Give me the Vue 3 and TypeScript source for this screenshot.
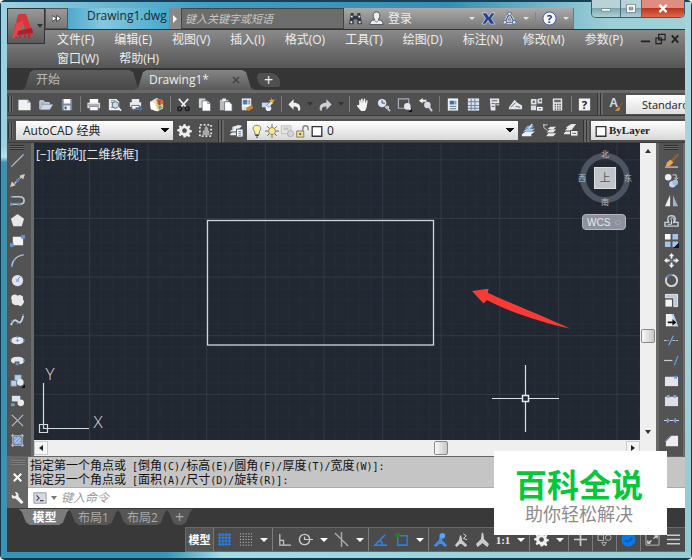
<script setup lang="ts">
import { ref } from 'vue'

interface Tool {
  kind: 'icon' | 'sep' | 'caret' | 'text'
  name?: string
  label?: string
}

const icon = (name: string, label: string): Tool => ({ kind: 'icon', name, label })
const sep: Tool = { kind: 'sep' }
const caret = (label: string): Tool => ({ kind: 'caret', label })

const gearPath =
  'M7 1h2l.4 2 1.6.7 1.8-1.2 1.5 1.5-1.2 1.8.7 1.6 2 .4v2l-2 .4-.7 1.6 1.2 1.8-1.5 1.5-1.8-1.2-1.6.7L9 15.500H7l-.4-2-1.600-.7-1.800 1.200-1.500-1.500 1.200-1.800-.7-1.600-2-.4v-2l2-.4.7-1.600L1.700 4l1.500-1.500L5 3.700 6.600 3zM8 5.500a2.500 2.500 0 1 0 .01 0z'

const icons: Record<string, string> = {
  logo: '<path d="M1 25 7 2h5v8L6 22z" fill="#c8343b"/><path d="M8 1h7l7 20-5 3-1-5-8 1 1-3 5-1-3-9-6 15-4 3z" fill="#d6353c"/><path d="M1 25 6 9l1 1 6-3-6 15-2 3z" fill="#e2474b"/><path d="m7 18 9-2 5-1 1 5-7 1-9 1z" fill="#b01f2a"/><path d="M5 23v3M9 21v4M14 20v5M18 20v6" stroke="#b92a33" stroke-width="1.500"/>',
  new: '<path d="M1.500 3h10l3 3v8h-13z" fill="#eef0f4"/><path d="M11 3v3.500h3.500z" fill="#aab"/>',
  open: '<path d="M2 13V4h4l1 2h5v2" fill="#aab6c6" stroke="#dde3ec"/><path d="M2 13.500 5 8h11l-3.500 5.500z" fill="#cdd8e8" stroke="#8793a8" stroke-width=".6"/>',
  save: '<path d="M3 2h11v12H3z" fill="#7888a4"/><path d="M5 2h7v5H5z" fill="#fff"/><path d="M5 9h7v5H5z" fill="#e7eaf0"/><path d="M6 10h2v3H6z" fill="#456"/>',
  print: '<path d="M4 2h9v5H4z" fill="#fff"/><path d="M1.500 6h13.500v6H1.500z" fill="#dfe2e7"/><path d="M4 10h9v4.500H4z" fill="#fafafa" stroke="#667" stroke-width=".8"/><path d="M2 8.500h12" stroke="#778"/>',
  preview: '<path d="M2 2h8l3 3v9H2z" fill="#eceff3"/><path d="M4 4h5M4 6h3M4 11h3" stroke="#788"/><circle cx="9" cy="8.500" r="3.500" fill="#cfdae8" stroke="#567"/><path d="m11.500 11 3.500 3.500" stroke="#eee" stroke-width="2"/>',
  publish: '<path d="M4 2h8v4H4zM2 5.500h12v5H2z" fill="#e8eaee"/><path d="M4 9h8v4H4z" fill="#fff" stroke="#667"/><path d="M8 11h4V8.500l4 4-4 3.500v-3H8z" fill="#4a6da6"/>',
  web: '<path d="M1 5 8 1l7 3v8l-6 3.500L2 13z" fill="#dfe8d8"/><path d="M7 3q5-2 8 1v4h-4z" fill="#dd6b3b"/><path d="M8 4c-1 4 0 7 3 10l4-2V8l-4-1z" fill="#eac656"/><path d="M1 5c4 0 7 3 7 10l-6-2z" fill="#fff"/><path d="M11 3q-4 3 0 6l2-1q-2-2 0-4z" fill="#b34a35"/><path d="M10 10q3-2 4 1l-3 3z" fill="#5f9cca"/>',
  cut: '<path d="m3 2 8 9M13 2 5 11" stroke="#eef0f4" stroke-width="1.800"/><circle cx="4" cy="12.500" r="2" fill="none" stroke="#1c1e22" stroke-width="1.600"/><circle cx="12" cy="12.500" r="2" fill="none" stroke="#1c1e22" stroke-width="1.600"/>',
  copy: '<path d="M2 1.500h7v10H2z" fill="#d5d8de"/><path d="M5.500 4h6l3 3v8h-9z" fill="#fff" stroke="#5d6470" stroke-width=".8"/><path d="M11.500 4v3h3" fill="none" stroke="#788"/>',
  paste: '<path d="M2 3h9v11H2z" fill="#b7b9bd"/><path d="M4.500 1.500h4v3h-4z" fill="#eee"/><path d="M7 5h5l3 3v7H7z" fill="#fff" stroke="#5d6470" stroke-width=".8"/>',
  block: '<path d="M3 1.500h10v10H3z" fill="#fff"/><path d="M4 3h5v5H4z" fill="#4d7fb5"/><path d="M10 3h2v5h-2z" fill="#89a"/><path d="M3 10h6v4H3z" fill="#dce3ee"/><path d="m14 8-7 4 3 3 5-3z" fill="#c98331"/>',
  match: '<path d="M2 6h8v5H2z" fill="#cad8ec"/><circle cx="9" cy="12" r="3" fill="#eef"/><path d="m7 9 5-5 2 2-4 5z" fill="#dfe3ea" stroke="#667" stroke-width=".6"/><path d="m12 0 1 3 3 0-2 2 0 3-2-3-3-1 3-1z" fill="#e5a93c"/>',
  undo: '<path d="M7 2.500v3.500c5 0 8 2 7 8l-2 1c0-4-1-5-5-5v3.500L1.500 8z" fill="#eef0f3"/>',
  redo: '<path d="M9 2.500V6C4 6 1 8 2 14l2 1c0-4 1-5 5-5v3.500L14.500 8z" fill="#cdd0d5"/>',
  pan: '<path d="M4.500 8V3.500q1-1 1.500.2l.5 3V2q1-1 1.700 0v4.500L9.500 2q1-.8 1.500.3L10.700 7l1.500-3.500q1.200-.4 1.300.6L12.500 10q-.5 3-2 5H6.500L2 9.500q.2-1.400 1.500-.8z" fill="#f2f2f4"/>',
  zoomrt: '<circle cx="6.500" cy="6.500" r="4.500" fill="#dce4ee"/><path d="M6.500 3.500v3h3" stroke="#345" fill="none"/><circle cx="12" cy="11" r="2" fill="#ccd2da"/><path d="m10 10 5 5" stroke="#bbc" stroke-width="2"/>',
  zoomwin: '<path d="M1.500 2h11v10h-11z" fill="none" stroke="#aab" stroke-width="1.300"/><circle cx="11" cy="10" r="3.500" fill="#e4e8ee"/><path d="m13 12 2 2" stroke="#eee" stroke-width="2"/><path d="M16 12v4h-4z" fill="#111"/>',
  zoomprev: '<path d="m1 4 4-3v2h4v2H5v2z" fill="#eee"/><circle cx="10" cy="8.500" r="3.500" fill="#d8dde5"/><path d="m12 11 3 4" stroke="#ccd" stroke-width="2"/>',
  props: '<path d="M3 1.500h11v13H3z" fill="#eef1f6"/><path d="M5 4h5v4H5z" fill="#3d6fb0"/><path d="M5 10h7M5 12.500h7M11.500 4v4" stroke="#567"/>',
  design: '<path d="M2 1.500h12v13H2z" fill="#dfe5ee"/><path d="M5.500 2v12M9.500 2v12M2 5h12M2 9h12M2 12h12" stroke="#617ca0" stroke-width="1"/>',
  palette: '<path d="M3 1.500h10v5H9v8H4z" fill="#e5e7eb"/><path d="M5 4h6M5 7h3M5 10h3" stroke="#556"/><path d="M10 7h3v2h-3z" fill="#bbb"/>',
  sheet: '<path d="m1 11 6-8 3 3 5 3v4H1z" fill="#e2e5ea"/><path d="m3 11 5-5M8 10l5 1" stroke="#667"/>',
  markup: '<path d="M2 2h6v6H2zM9 2l5-1v6H9zM2 9h6v5H2z" fill="#dadde3"/><path d="M4 4h2v2H4zM11 3h2v2h-2z" fill="#556"/><path d="M8 10h7v5H8z" fill="#fff" stroke="#556"/><path d="M10 12.500h3" stroke="#556"/>',
  calc: '<path d="M3 1.500h10v13H3z" fill="#e6e8ec"/><path d="M4.500 3h7v2.500h-7z" fill="#667"/><path d="M5 8h7M5 10.500h7M5 13h7" stroke="#555" stroke-width="1.400" stroke-dasharray="1.500 1"/>',
  help: '<path d="M2 1.500h12v13H2z" fill="#f2f2f4"/><text x="8" y="13" text-anchor="middle" font-family="Open Sans" font-weight="700" font-size="12" fill="#222">?</text>',
  style: '<text x="6" y="11" text-anchor="middle" font-family="Liberation Sans" font-weight="700" font-size="13" fill="#d8dade">A</text><path d="m16 5-5 6 1 1 4-5z" fill="#8d5a30"/><path d="M12 11c-3 0-2 3-5 3 3 2 6 1 6-2z" fill="#c98d38"/>',
  gear: `<path fill-rule="evenodd" d="${gearPath}" fill="#eee"/>`,
  space: '<path d="M2 2h12v12H2z" fill="none" stroke="#ddd" stroke-width="2" stroke-dasharray="2 2"/><path d="M5 13V8h2V5l2-2 2 3v2l1 1v4z" fill="#aaa"/>',
  layers: '<path d="m4 4 6-2 4 1-3 3H3zM2 8l3-2h5l-1 3H1zM2 11l2-1h4v3H1z" fill="#e8eaed"/><path d="M8 6.500h7V15H8z" fill="#fff" stroke="#456"/><path d="M10 9h3M10 11h3M10 13h3" stroke="#47a"/>',
  bulb: '<path d="M8 1.500c5.500 0 5 5 2.500 7.500V12h-5V9C2.500 6 3 1.500 8 1.500z" fill="#fff2a8" stroke="#777"/><path d="M6 13h4M7 15h2" stroke="#444" stroke-width="1.500"/>',
  sun: '<path d="M8 0v16M0 8h16M2.500 2.500l11 11M13.500 2.500l-11 11" stroke="#5b5b50"/><circle cx="8" cy="8" r="4" fill="#fbe78c" stroke="#8f8348"/>',
  vpfreeze: '<path d="M1.500 2h11v9h-11z" fill="#e5e5e5" stroke="#bbb"/><path d="M4 4h6v3H4z" fill="#c4c4c4"/><circle cx="12" cy="11" r="3.500" fill="#d5d5d5" stroke="#aaa"/>',
  lock: '<path d="M2 8h8v7H2z" fill="#f2df8f" stroke="#7e744a"/><path d="M9 8V5q0-3 3-3t3 3v2" fill="none" stroke="#888" stroke-width="1.600"/><path d="M5 11.500h2" stroke="#444" stroke-width="2"/>',
  swatch: '<path d="M2.500 3h11v11h-11z" fill="#fff" stroke="#333" stroke-width="1.500"/>',
  lay1: '<path d="m1 12 4-3h10l-4 3v2H1z" fill="#eef"/><path d="m2 9 4-3h9l-4 3z" fill="#a6c4ea"/><path d="m4 6 3-3h7l-3 3z" fill="#7ea8de"/><path d="m8 6 4-5" stroke="#dde" stroke-width="1.500"/>',
  lay2: '<path d="m5 13 2-2h8l-3 3H5zM5 10l3-3h7l-3 3zM6 6l3-2h6l-3 3z" fill="#e5e7ea"/><path d="M1 2h5M2 1v4l4 3" fill="none" stroke="#ccc"/>',
  lay3: '<path d="m4 4 5-3h5l-3 4H3zM2 8l3-3h6l-2 3zM1 11l2-2h5v3H1z" fill="#e8e9eb"/><path d="M8 8h8v6H8z" fill="#eee" stroke="#444"/><path d="M10 11h4" stroke="#555"/>',
  line: '<path d="M2 14 14 2" stroke="#b4bfd2" stroke-width="1.500"/><path d="M1 13h2v2H1zM13 1h2v2h-2z" fill="#6c94cc"/>',
  xline: '<path d="M2 14 14 2" stroke="#c6ccd7" stroke-width="1.500" stroke-dasharray="3 1"/><path d="m0 15 2-6 4 4zM16 1l-2 6-4-4z" fill="#d5c9c4"/><path d="M6.500 6.500h3v3h-3z" fill="#5c82c0"/>',
  pline: '<path d="M1 4h9q5 0 5 4t-5 4H2" fill="none" stroke="#bcc8d9" stroke-width="1.800"/><path d="M0 10.500h3v3H0zM8 10.500h3v3H8zM1 3h2v2H1z" fill="#698fc5"/>',
  polygon: '<path d="m8 1 7 5-2.500 8h-9L1 6z" fill="#e4e6ea"/>',
  rect: '<path d="M3 4h11v9H3z" fill="#f0f2f7"/><path d="M0 11h4v4H0zM12 2h4v4h-4z" fill="#6790cb"/>',
  arc: '<path d="M2 14Q3 4 14 2" fill="none" stroke="#b8c6da" stroke-width="1.500"/><path d="M1 13h2v2H1zM4 6h2v2H4zM13 1h2v2h-2z" fill="#6c98d4"/>',
  circle: '<circle cx="8" cy="8" r="6" fill="#dce3ec"/><path d="m7 8 4-4" stroke="#618ac0"/><path d="M6.500 6.500h3v3h-3z" fill="#8fb0dc"/>',
  cloud: '<path d="M3 2q3-1 5 1 3-2 6 1-1 2 1 5-1 4-4 5-3-2-5-1-5-1-4-5-2-4 1-6z" fill="#e6e8ec"/>',
  spline: '<path d="M1 13Q4 5 8 9t6-6" fill="none" stroke="#c8d0dc" stroke-width="2"/><path d="M1 8h2v2H1zM7 10h2v2H7zM13 1h2v2h-2z" fill="#5b8acb"/>',
  ellipse: '<ellipse cx="8" cy="8" rx="7" ry="4" fill="#e2e6ee"/><path d="M0 7h2v2H0zM14 7h2v2h-2zM7 3h2v2H7zM7 7h2v2H7z" fill="#5b86c4"/>',
  earc: '<path d="M1 8q0-4 7-4t7 4-5 4V9H5v2Q1 11 1 8z" fill="#e2e6ee"/><path d="M6 10h3v3H6zM14 7h2v2h-2z" fill="#6d94cb"/>',
  insert: '<path d="M1 8h6v6H1zM5 2h7v6H5z" fill="#b8cdea" stroke="#6b88b0" stroke-width=".7"/><circle cx="11" cy="10" r="3.500" fill="#e5e8ee"/><path d="M16 12v4h-4z" fill="#111"/>',
  mkblock: '<path d="M2 3h9v6H2z" fill="#dde4ef"/><circle cx="11.500" cy="10.500" r="3.500" fill="#e9ebef"/><path d="M1 11h4v3H1z" fill="#6f9cd5"/>',
  point: '<path d="m2 2 12 12M14 2 2 14" stroke="#b5bcc6" stroke-width="1.300"/><path d="M7 7h2v2H7z" fill="#6ca0e2"/>',
  hatch: '<path d="M1 3h14M1 13h14M3 1v14M13 1v14" stroke="#ccd"/><path d="M4 4h8v8H4z" fill="#9dc1f2"/><path d="m4 8 4-4M4 12l8-8M8 12l4-4" stroke="#5f8ac8"/>',
  erase: '<path d="m15 0-8 8 2 2 7-8z" fill="#9b5b31"/><path d="m7 7-4 3-1 4h4l4-4z" fill="#e9a84b"/><path d="M1 15h14" stroke="#eee"/>',
  copyobj: '<circle cx="4.500" cy="4.500" r="3.500" fill="#eee"/><circle cx="9" cy="12" r="3.500" fill="#c3d5ef"/><circle cx="12" cy="10" r="3" fill="#a3bde0"/><path d="M9 2h4v4m-2-1 2 2 2-2" fill="none" stroke="#ddd"/>',
  mirror: '<path d="M6.500 2v12H1z" fill="#eceef1"/><path d="M9.500 2v12H15z" fill="#9cb0ce"/>',
  offset: '<path d="M1 14v-4h4q-3-7 3-7t3 7h4v4z" fill="none" stroke="#bdd1e2" stroke-width="1.500"/><path d="M4 12h4V8q-2-3 1-3t1 6" fill="none" stroke="#e5e9ee"/>',
  array: '<path d="M1 1h6v6H1z" fill="#fff"/><path d="M9 1h6v6H9zM1 9h6v6H1zM9 9h6v6H9z" fill="#a2c3ee"/><path d="M16 10v6h-6z" fill="#111"/>',
  move: '<path d="M8 0 5 3.500h2V6h2V3.500h2zM8 16l-3-3.500h2V10h2v2.500h2zM0 8l3.500-3v2H6v2H3.500v2zM16 8l-3.500-3v2H10v2h2.500v2z" fill="#ebedf0"/><path d="M7 7h2v2H7z" fill="#6290d0"/>',
  rotate: '<circle cx="8" cy="8" r="6" fill="none" stroke="#d7d9dd" stroke-width="2"/><path d="M3 5q2-4 6-3" fill="none" stroke="#5576b4" stroke-width="2"/>',
  scale: '<path d="M1.500 1.500h13v13h-4V5h-9z" fill="#b5c7e2" stroke="#eee"/><path d="M1.500 7h7v7.500h-7z" fill="#f2f3f5"/>',
  stretch: '<path d="M2 1h8l5 13H2z" fill="#eff1f5"/><path d="M10 1 15 14h-3L8 1z" fill="#b4cdef"/><path d="M4 9h5V6.500L13 10l-4 3.500V11H4z" fill="#111"/>',
  trim: '<path d="M0 8h5M9 8h6" stroke="#c5cbd3" stroke-dasharray="3 1"/><path d="M5 13 10 3" stroke="#76a6e1" stroke-width="1.300"/>',
  extend: '<path d="M0 8h9" stroke="#c5cbd3" stroke-width="1.300"/><path d="m11 13 4-10" stroke="#5f94da" stroke-width="1.500"/>',
  breakpt: '<path d="M1 4h14v10H1z" fill="#e2e4ee"/><path d="M11 3h3v3h-3z" fill="#6796d8"/>',
  break: '<path d="M1 4h14v10H1z" fill="#dcdfeb"/><path d="M3 2h3v3H3zM10 2h3v3h-3z" fill="#78a2dc"/>',
  join: '<path d="M0 8h16" stroke="#d5dbe3"/><path d="m3 5 4 3-4 3zM13 5 9 8l4 3z" fill="#6da1e2"/>',
  chamfer: '<path d="M2 14V9l6-6h7v11z" fill="#ececf2"/><path d="m1 9 6-6" stroke="#78a0dc"/>',
  binoc: '<path d="M3 2h3v3h4V2h3l2 12h-5V9H6v5H1z" fill="#333a48"/><path d="M3 5h2v2H3zM11 5h2v2h-2zM2.500 11h2v2h-2zM11.500 11h2v2h-2z" fill="#e5e8ee"/>',
  user: '<path d="M8 1q4 0 3.500 5L10 9.500q5 0 5 5H1q0-5 5-5L4.500 6Q4 1 8 1z" fill="#eee" stroke="#4b515d"/><path d="m6 10 2 2 2-2" fill="none" stroke="#667"/>',
  exchange: '<path d="M1 2h5l2.500 4L11 2h4l-4 6 4 6h-5l-2.500-4L5 14H1l4-6z" fill="#25438c" stroke="#c9d8f5" stroke-width=".8"/>',
  a360: '<path d="M8 3 3 12h10z" fill="none" stroke="#e5eaf3" stroke-width="3"/><path d="M8 3 3 12h10z" fill="none" stroke="#466099" stroke-width="1.300"/><circle cx="8" cy="3" r="2" fill="#dde4f2" stroke="#466099"/><circle cx="3" cy="12" r="2" fill="#dde4f2" stroke="#466099"/><circle cx="13" cy="12" r="2" fill="#dde4f2" stroke="#466099"/>',
  info: '<circle cx="8" cy="8" r="7" fill="#f7f8fb" stroke="#3b5797"/><text x="8" y="12.500" text-anchor="middle" font-family="Open Sans" font-weight="700" font-size="12" fill="#233f87">?</text>',
  wrench: '<path d="M2 5q-1 5 4 4l6 6 2.500-2L9 7q1-5-4-5l2 3-2 2z" fill="#f1f1f1"/>',
  prompt: '<path d="M1 2h14v12H1z" fill="#d5dae2" stroke="#8d96a6"/><path d="m4 5 3 3-3 3M8 11h4" fill="none" stroke="#445" stroke-width="1.300"/>',
  grid: '<path d="M3 1v14M6.300 1v14M9.600 1v14M13 1v14M1 3h14M1 6.300h14M1 9.600h14M1 13h14" stroke="#2a80ea" stroke-width="1.200"/>',
  dots: '<path d="M2 2h13M2 5h13M2 8h13M2 11h13M2 14h13" stroke="#ccc" stroke-dasharray="1.200 1.800"/>',
  ortho: '<path d="M3 2v12h12M3 9h4v5" fill="none" stroke="#c5c5c5" stroke-width="1.300"/>',
  polar: '<circle cx="7" cy="8" r="5.500" fill="none" stroke="#ccc" stroke-width="1.500"/><path d="M7 5v3h9" fill="none" stroke="#ccc" stroke-width="1.300"/>',
  iso: '<path d="m1 1 14 14M8 0v16" stroke="#aaa" stroke-width="1.500"/>',
  track: '<path d="M15 14H2L13 3M10 14q0-4-3-5" fill="none" stroke="#2b83ed" stroke-width="1.600"/>',
  osnap: '<path d="M4 4h10v10H4z" fill="none" stroke="#2b7cdb" stroke-width="1.700"/><path d="M1 1h5v5H1z" fill="#118719"/>',
  annovis: '<path d="M8 4 9 9l5 5-1 1-5-4-5 4-1-1 5-5z" fill="#3c8ef0" stroke="#3c8ef0" stroke-width="1.500"/><circle cx="10" cy="4" r="3" fill="#5aa4f7"/>',
  annoauto: '<path d="M7 4 8 9l5 5-1 1-5-4-4 4-1-1 4-5z" fill="#ccc" stroke="#ccc" stroke-width="1.500"/><path d="m10 2 3 2-3 3 4 1" fill="none" stroke="#ddd"/>',
  anno: '<path d="M8 1 9 8l5 5-1 2-5-4-5 4-1-2 5-5z" fill="#c9c9c9" stroke="#ccc" stroke-width="1.500"/>',
  plus: '<path d="M8 1v14M1 8h14" stroke="#ccc" stroke-width="1.800"/>',
  isolate: '<path d="M1 3h6v6H1zM5 11h5l-2.500 4z" fill="none" stroke="#bbb"/><circle cx="12" cy="6" r="3" fill="none" stroke="#bbb"/>',
  hardware: '<circle cx="8" cy="8" r="7.500" fill="#0b78e8"/><path d="M4 9q4 3 8-3" fill="none" stroke="#075cb4" stroke-width="2"/>',
  clean: '<path d="M1 2h14v12H1z" fill="none" stroke="#bbb"/><path d="M9 7l4-3m0 3V4h-3M7 9l-4 3m0-3v3h3" fill="none" stroke="#ddd" stroke-width="1.300"/>',
  menu: '<path d="M1 3.500h14M1 8h14M1 12.500h14" stroke="#ccc" stroke-width="1.500"/>'
}

const standardBar: Tool[] = [
  icon('new', '新建'), icon('open', '打开'), icon('save', '保存'), sep,
  icon('print', '打印'), icon('preview', '打印预览'), icon('publish', '发布'), icon('web', '三维打印'), sep,
  icon('cut', '剪切'), icon('copy', '复制'), icon('paste', '粘贴'), icon('block', '特性匹配'), icon('match', '块编辑器'), sep,
  icon('undo', '放弃'), caret('放弃列表'), icon('redo', '重做'), caret('重做列表'), sep,
  icon('pan', '平移'), icon('zoomrt', '实时缩放'), icon('zoomwin', '窗口缩放'), icon('zoomprev', '缩放上一个'), sep,
  icon('props', '特性'), icon('design', '设计中心'), icon('palette', '工具选项板'), icon('sheet', '图纸集'), icon('markup', '标记集'), icon('calc', '计算器'), sep,
  icon('help', '帮助')
]

const drawTools: Tool[] = [
  icon('line', '直线'), icon('xline', '构造线'), icon('pline', '多段线'), icon('polygon', '多边形'), icon('rect', '矩形'),
  icon('arc', '圆弧'), icon('circle', '圆'), icon('cloud', '修订云线'), icon('spline', '样条曲线'), icon('ellipse', '椭圆'),
  icon('earc', '椭圆弧'), icon('insert', '插入块'), icon('mkblock', '创建块'), icon('point', '点'), icon('hatch', '图案填充')
]

const modifyTools: Tool[] = [
  icon('erase', '删除'), icon('copyobj', '复制对象'), icon('mirror', '镜像'), icon('offset', '偏移'), icon('array', '阵列'),
  icon('move', '移动'), icon('rotate', '旋转'), icon('scale', '缩放'), icon('stretch', '拉伸'), icon('trim', '修剪'),
  icon('extend', '延伸'), icon('breakpt', '打断于点'), icon('break', '打断'), icon('join', '合并'), icon('chamfer', '倒角')
]

const statusTools: Tool[] = [
  icon('grid', '栅格'), icon('dots', '捕捉'), caret('捕捉设置'), sep,
  icon('ortho', '正交'), icon('polar', '极轴'), caret('极轴设置'), icon('iso', '等轴测'), caret('等轴测设置'), sep,
  icon('track', '对象追踪'), icon('osnap', '对象捕捉'), caret('对象捕捉设置'), sep,
  icon('annovis', '注释可见性'), icon('annoauto', '自动缩放'), icon('anno', '注释比例'),
  { kind: 'text', label: '1:1' }, caret('比例列表'), sep,
  icon('gear', '切换工作空间'), caret('工作空间列表'), sep,
  icon('plus', '注释监视器'), sep, icon('isolate', '隔离对象'), sep,
  icon('hardware', '硬件加速'), sep, icon('clean', '全屏显示'), icon('menu', '自定义')
]

const menus = ['文件(F)', '编辑(E)', '视图(V)', '插入(I)', '格式(O)', '工具(T)', '绘图(D)', '标注(N)', '修改(M)', '参数(P)', '窗口(W)', '帮助(H)']

const history = [
  '指定第一个角点或 [倒角(C)/标高(E)/圆角(F)/厚度(T)/宽度(W)]:',
  '指定另一个角点或 [面积(A)/尺寸(D)/旋转(R)]:'
].map((line) => line.match(/[\x20-\x7e]+|[^\x20-\x7e]+/g) ?? [])

const isLatin = (part: string): boolean => /^[\x20-\x7e]/.test(part)

const command = ref('')
const search = ref('')
const layouts = ['模型', '布局1', '布局2']
const layout = ref('模型')
</script>

<template>
  <div class="window">
    <header class="head">
      <button class="logo" aria-label="应用程序菜单">
        <svg viewBox="0 0 23 27" class="logo-mark" v-html="icons.logo"></svg>
        <span class="tri"></span>
      </button>
      <div class="title">
        <button class="quick" aria-label="快速访问">
          <svg viewBox="0 0 10 8" class="chev"><path d="M0 .5v7L5 4zM5 .5v7L10 4z" fill="#fff" stroke="#222" stroke-width=".8" /></svg>
        </button>
        <h1 class="doc">Drawing1.dwg</h1>
        <button class="expand" aria-label="展开搜索"><span class="tri-right"></span></button>
        <input v-model="search" class="search" placeholder="键入关键字或短语" aria-label="搜索" />
        <div class="account">
          <button class="ico" aria-label="查找"><svg viewBox="0 0 16 16" v-html="icons.binoc"></svg></button>
          <button class="login"><svg viewBox="0 0 16 16" v-html="icons.user"></svg>登录</button>
          <span class="fill"></span>
          <span class="tri light"></span>
          <button class="ico" aria-label="交换"><svg viewBox="0 0 16 16" v-html="icons.exchange"></svg></button>
          <button class="ico" aria-label="连接"><svg viewBox="0 0 16 16" v-html="icons.a360"></svg></button>
          <span class="tri light"></span>
          <span class="rule"></span>
          <button class="ico" aria-label="信息"><svg viewBox="0 0 16 16" v-html="icons.info"></svg></button>
          <span class="tri light"></span>
        </div>
        <div class="winbtns">
          <button class="wb wide" aria-label="最小化"><svg viewBox="0 0 12 10"><path d="M1 5h10v3H1z" fill="#fff" stroke="#567" stroke-width=".7" /></svg></button>
          <button class="wb" aria-label="最大化"><svg viewBox="0 0 12 10"><path d="M1 .5h10v9H1zM4 3.500h4v3H4z" fill="#fff" fill-rule="evenodd" stroke="#567" stroke-width=".7" /></svg></button>
          <button class="wb close" aria-label="关闭"><svg viewBox="0 0 12 10"><path d="m2 1 8 8m0-8-8 8" stroke="#fff" stroke-width="2.500" /></svg></button>
        </div>
      </div>
      <div class="menubar">
        <nav class="menus">
          <button v-for="m in menus" :key="m" class="menu">{{ m }}</button>
        </nav>
        <div class="docbtns">
          <button aria-label="最小化图形"><svg viewBox="0 0 12 12"><path d="M1 8.500h10" stroke="#222" stroke-width="2" /></svg></button>
          <button aria-label="还原图形"><svg viewBox="0 0 12 12"><path d="M4 1h7v6H4zM1 5h6v6H1z" fill="none" stroke="#222" stroke-width="1.300" /></svg></button>
          <button aria-label="关闭图形"><svg viewBox="0 0 12 12"><path d="m2 2 7 8M9 2l-7 8" stroke="#222" stroke-width="2" /></svg></button>
        </div>
      </div>
    </header>

    <div class="filetabs">
      <button class="ftab">开始</button>
      <button class="ftab current">Drawing1*<svg viewBox="0 0 8 8" class="x"><path d="m1 1 6 6m0-6L1 7" stroke="#444" stroke-width="1.500" /></svg></button>
      <button class="addtab" aria-label="新图形">+</button>
    </div>

    <div class="bar">
      <span class="grip"></span>
      <template v-for="(t, i) in standardBar" :key="i">
        <button v-if="t.kind === 'icon'" class="tool" :aria-label="t.label"><svg viewBox="0 0 16 16" v-html="icons[t.name!]"></svg></button>
        <button v-else-if="t.kind === 'caret'" class="drop" :aria-label="t.label"><span class="tri"></span></button>
        <span v-else class="sep"></span>
      </template>
      <span class="grip double"></span>
      <button class="tool" aria-label="文字样式管理"><svg viewBox="0 0 16 16" v-html="icons.style"></svg></button>
      <select class="combo textstyle" aria-label="文字样式"><option>Standard</option></select>
    </div>

    <div class="bar second">
      <span class="grip"></span>
      <select class="combo workspace" aria-label="工作空间"><option>AutoCAD 经典</option></select>
      <button class="tool" aria-label="工作空间设置"><svg viewBox="0 0 16 16" v-html="icons.gear"></svg></button>
      <button class="tool" aria-label="我的工作空间"><svg viewBox="0 0 16 16" v-html="icons.space"></svg></button>
      <span class="grip double"></span>
      <button class="tool" aria-label="图层特性"><svg viewBox="0 0 16 16" v-html="icons.layers"></svg></button>
      <div class="layerbox">
        <svg v-for="n in ['bulb', 'sun', 'vpfreeze', 'lock', 'swatch']" :key="n" viewBox="0 0 16 16" v-html="icons[n]"></svg>
        <select class="combo layer" aria-label="图层"><option>0</option></select>
      </div>
      <button class="tool" aria-label="置为当前"><svg viewBox="0 0 16 16" v-html="icons.lay1"></svg></button>
      <button class="tool" aria-label="上一个图层"><svg viewBox="0 0 16 16" v-html="icons.lay2"></svg></button>
      <button class="tool" aria-label="图层状态"><svg viewBox="0 0 16 16" v-html="icons.lay3"></svg></button>
      <span class="grip double"></span>
      <div class="layerbox color">
        <svg viewBox="0 0 16 16" v-html="icons.swatch"></svg>
        <select class="combo bylayer" aria-label="颜色"><option>ByLayer</option></select>
      </div>
    </div>

    <main class="work">
      <aside class="rail">
        <span class="hgrip"></span>
        <button v-for="t in drawTools" :key="t.name" :aria-label="t.label"><svg viewBox="0 0 16 16" v-html="icons[t.name!]"></svg></button>
      </aside>
      <section class="view">
        <div class="canvas">
          <svg class="drawing">
            <defs>
              <pattern id="grid" x="55" y="75" width="58.600" height="58.600" patternUnits="userSpaceOnUse">
                <path d="M12.200 0v59M23.900 0v59M35.600 0v59M47.300 0v59M0 12.200h59M0 23.900h59M0 35.600h59M0 47.300h59" stroke="#252c37" />
                <path d="M.5 0v59M0 .5h59" stroke="#303845" fill="none" />
              </pattern>
            </defs>
            <rect width="100%" height="100%" fill="#212832" />
            <rect width="100%" height="100%" fill="url(#grid)" />
            <rect x="173.500" y="77.500" width="226" height="124.500" fill="none" stroke="#d3d5de" stroke-width="1.300" />
            <path d="m438 148 16.500-2.300-.5 4.300c20 9 60 25 82 35.500-25-5-62-17-83-28.500l-3.500 3.500z" fill="#fb3a36" />
            <path d="M458 255.500h30M495 255.500h30M491.500 222v30M491.500 259v30" stroke="#dfe0e5" stroke-width="1.200" />
            <rect x="488.500" y="252.500" width="6" height="6" fill="none" stroke="#e7e8ee" stroke-width="1.500" />
            <path d="M9.500 240v45.500H55M5.500 281.500h8v8h-8z" fill="none" stroke="#d9dade" stroke-width="1.200" />
            <text x="16" y="237" text-anchor="middle" class="axis">Y</text>
            <text x="64" y="285" text-anchor="middle" class="axis">X</text>
          </svg>
          <p class="viewlabel">[−][俯视][二维线框]</p>
          <div class="compass">
            <svg viewBox="0 0 56 60">
              <circle cx="28" cy="30" r="22" fill="none" stroke="#4d5562" stroke-width="6" />
              <rect x="17.500" y="19.500" width="21" height="21" fill="#c2c5c8" stroke="#dcdee0" />
              <g class="dirs" text-anchor="middle">
                <text x="28" y="9">北</text><text x="28" y="57">南</text>
                <text x="5" y="33">西</text><text x="51" y="33">东</text>
                <text x="28" y="34" class="top">上</text>
              </g>
            </svg>
            <button class="wcs">WCS<span></span></button>
          </div>
        </div>
        <div class="vscroll"><span class="up"></span><span class="space-a"></span><span class="thumb"></span><span class="space-b"></span><span class="down"></span></div>
        <div class="hscroll"><span class="arrow"><i class="left"></i></span><span class="space-c"></span><span class="thumb"></span><span class="space-d"></span><span class="arrow"><i class="right"></i></span></div>
      </section>
      <aside class="rail right">
        <span class="hgrip"></span>
        <button v-for="t in modifyTools" :key="t.name" :aria-label="t.label"><svg viewBox="0 0 16 16" v-html="icons[t.name!]"></svg></button>
      </aside>
    </main>

    <section class="cmd">
      <div class="cmdside">
        <span class="hgrip soft"></span>
        <button aria-label="关闭命令行"><svg viewBox="0 0 16 16"><path d="m4 4 8 8m0-8-8 8" stroke="#fff" stroke-width="2" /></svg></button>
        <button aria-label="命令行设置"><svg viewBox="0 0 16 16" v-html="icons.wrench"></svg></button>
      </div>
      <div class="cmdmain">
        <div class="history">
          <p v-for="(line, i) in history" :key="i"><span v-for="(part, j) in line" :key="j" :class="{ latin: isLatin(part) }">{{ part }}</span></p>
        </div>
        <div class="entry">
          <svg viewBox="0 0 16 16" v-html="icons.prompt"></svg>
          <span class="tri grey"></span>
          <input v-model="command" placeholder="键入命令" aria-label="命令" />
        </div>
      </div>
    </section>

    <div class="layouts">
      <button v-for="l in layouts" :key="l" class="ltab" :class="{ on: l === layout }" @click="layout = l">{{ l }}</button>
      <button class="ltab add" aria-label="新布局">+</button>
    </div>

    <footer class="status">
      <div class="statusbar">
        <button class="space-btn">模型</button>
        <template v-for="(t, i) in statusTools" :key="i">
          <button v-if="t.kind === 'icon'" class="tool" :aria-label="t.label"><svg viewBox="0 0 16 16" v-html="icons[t.name!]"></svg></button>
          <button v-else-if="t.kind === 'caret'" class="drop" :aria-label="t.label"><span class="tri white"></span></button>
          <button v-else-if="t.kind === 'text'" class="scale">{{ t.label }}</button>
          <span v-else class="sep"></span>
        </template>
      </div>
    </footer>

    <div class="badge">
      <strong>百科全说</strong>
      <span>助你轻松解决</span>
    </div>
  </div>
</template>

<style>
body {
  margin: 0;
}
</style>

<style scoped>
* {
  box-sizing: border-box;
}
button,
input,
select {
  margin: 0;
  padding: 0;
  border: 0;
  background: none;
  font: inherit;
  color: inherit;
  border-radius: 0;
  min-width: 0;
}
svg {
  display: block;
}
h1,
p {
  margin: 0;
}
.window {
  position: relative;
  display: flex;
  flex-direction: column;
  min-height: 100vh;
  padding: 0 7px 8px;
  overflow: hidden;
  background:
    linear-gradient(#173f58, #173f58) top / 100% 2px no-repeat,
    linear-gradient(#12384f, #12384f) bottom / 100% 2px no-repeat,
    linear-gradient(#12384f, #12384f) left / 1px 100% no-repeat,
    linear-gradient(#12384f, #12384f) right / 1px 100% no-repeat,
    linear-gradient(90deg, #3993b4 0 24%, #a2dbe6 32%, #97cdd3) bottom / 100% 8px no-repeat,
    linear-gradient(#a5d4da 0 28%, #a1d3d7 60%, #8fc9ce) right / 7px 100% no-repeat,
    linear-gradient(#9cd2df 0 26%, #b9e2e8 28%, #3d91ac 29%, #3993b4) left / 7px 100% no-repeat,
    linear-gradient(90deg, #9ed2e0, #3d9fc2 30%, #3490b3 65%, #9dcfd7 88%, #a2d0d6);
  font: 12px/16px 'Open Sans', 'Noto Sans CJK SC', sans-serif;
  color: #eee;
  border-radius: 5px;
}
.tri {
  width: 0;
  height: 0;
  border: 3px solid transparent;
  border-top: 4px solid #333;
  border-bottom: 0;
}
.tri.light {
  border-top-color: #e5e5e5;
  border-width: 3px 3px 0;
}
.tri.white {
  border-width: 4px 4px 0;
  border-top-color: #fff;
}
.tri.grey {
  border-top-color: #777;
}
.head {
  display: grid;
  grid-template-columns: 38px 1fr;
  grid-template-rows: 29px auto;
  flex: none;
}
.logo {
  grid-column: 1;
  grid-row: 1 / 3;
  z-index: 1;
  display: flex;
  align-items: center;
  gap: 3px;
  width: 38px;
  height: 36px;
  margin-top: 8px;
  padding-left: 3px;
  border: 1px solid #333;
  background: linear-gradient(#999, #5b5b5b);
}
.logo-mark {
  width: 23px;
  height: 27px;
}
.title {
  grid-column: 2;
  grid-row: 1;
  display: flex;
  align-items: flex-end;
}
.quick {
  display: grid;
  place-items: center;
  width: 23px;
  height: 21px;
  background: linear-gradient(#9a9a9a, #777);
  border: 1px solid #555;
}
.chev {
  width: 9px;
  height: 7px;
}
.doc {
  width: 101px;
  height: 21px;
  padding-left: 19px;
  font-size: 12px;
  font-weight: 400;
  line-height: 15px;
  color: #172a35;
  white-space: nowrap;
  background: linear-gradient(90deg, #50a9cb, #85c8df 35%, #47a9cc);
}
.expand {
  display: grid;
  place-items: center;
  width: 12px;
  height: 21px;
  background: #888;
}
.tri-right {
  border: 4px solid transparent;
  border-left: 4px solid #fff;
  border-right: 0;
}
.search {
  width: 163px;
  height: 21px;
  padding-left: 3px;
  border: 1px solid #444;
  background: #6d6d6d;
  font-size: 11px;
  font-style: italic;
}
.search::placeholder {
  color: #c7c7c7;
  opacity: 1;
}
.account {
  display: flex;
  align-items: center;
  flex: 1;
  max-width: 230px;
  height: 21px;
  gap: 6px;
  padding: 0 4px;
  background: linear-gradient(#aaa, #777);
  border-right: 1px solid #777;
}
.account svg {
  width: 15px;
  height: 15px;
}
.login {
  display: flex;
  align-items: center;
  gap: 4px;
}
.fill {
  flex: 1;
}
.rule {
  width: 1px;
  height: 14px;
  background: #858585;
}
.winbtns {
  display: flex;
  align-self: flex-start;
  margin-left: auto;
  height: 18px;
  border: 1px solid #395c68;
  border-top: 0;
  border-radius: 0 0 5px 5px;
  overflow: hidden;
}
.wb {
  display: grid;
  place-items: center;
  width: 21px;
  border-right: 1px solid #486c78;
  background: linear-gradient(#b9d2d8 45%, #7fa6b0 50%, #aed0d4);
}
.wb svg {
  width: 12px;
  height: 9px;
}
.wb.wide {
  width: 29px;
}
.wb.close {
  width: 42px;
  border: 0;
  background: linear-gradient(#dd8e80 45%, #bd3521 50%, #da6a4f);
}
.menubar {
  grid-column: 1 / 3;
  grid-row: 2;
  display: flex;
  align-items: flex-start;
  padding: 0 4px 0 50px;
  background: linear-gradient(#8a8a8a, #555);
  border-top: 1px solid #333;
}
.menus {
  display: flex;
  flex-wrap: wrap;
  flex: 1;
  column-gap: 20px;
}
.menu {
  height: 19px;
  line-height: 19px;
  white-space: nowrap;
}
.docbtns {
  display: flex;
  gap: 4px;
  padding-top: 3px;
}
.docbtns svg {
  width: 11px;
  height: 12px;
}
.filetabs {
  display: flex;
  align-items: flex-end;
  flex: none;
  height: 22px;
  padding-left: 14px;
  background: #353535;
}
.ftab {
  display: flex;
  align-items: center;
  justify-content: space-between;
  width: 121px;
  height: 20px;
  padding: 0 15px;
  color: #bbb;
  background: linear-gradient(#5d5d5d, #484848);
  clip-path: polygon(0 100%, 4px 90%, 9px 10%, 13px 0, calc(100% - 13px) 0, calc(100% - 9px) 10%, calc(100% - 4px) 90%, 100% 100%);
}
.ftab.current {
  margin-left: -8px;
  color: #eee;
  background: linear-gradient(#858585, #5a5a5a);
}
.x {
  width: 8px;
  height: 8px;
}
.addtab {
  width: 23px;
  height: 14px;
  margin: 0 0 3px 2px;
  background: #505050;
  border-radius: 4px 9px 2px 9px;
  font-size: 16px;
  line-height: 14px;
}
.bar {
  display: flex;
  align-items: center;
  flex: none;
  height: 26px;
  overflow: hidden;
  background: #505050;
  border-top: 3px solid #696969;
  border-bottom: 1px solid #3b3b3b;
}
.bar.second {
  height: 27px;
}
.grip {
  flex: none;
  width: 5px;
  height: 16px;
  margin: 0 1px;
  background: repeating-linear-gradient(90deg, #333 0 1px, #666 1px 3px);
}
.grip.double {
  width: 6px;
  height: 22px;
  margin: 0 2px;
}
.tool {
  display: grid;
  place-items: center;
  flex: none;
  width: 21px;
  height: 20px;
}
.tool svg {
  width: 15px;
  height: 15px;
}
.drop {
  display: grid;
  place-items: center;
  flex: none;
  width: 10px;
  height: 20px;
}
.sep {
  flex: none;
  width: 6px;
  height: 16px;
  background: linear-gradient(#7c7c7c, #7c7c7c) center / 1px 100% no-repeat;
}
.combo {
  appearance: none;
  height: 19px;
  line-height: 19px;
  color: #222;
  outline: 0;
}
.textstyle {
  flex: 1;
  padding-left: 16px;
  font-size: 11px;
  background: linear-gradient(#fff, #dedede);
}
.workspace {
  width: 157px;
  margin: 0 1px 0 2px;
  padding-left: 7px;
}
.workspace,
.layer {
  background:
    linear-gradient(to bottom left, #111 50%, transparent 51%) right 8px center / 4px 5px no-repeat,
    linear-gradient(to bottom right, #111 50%, transparent 51%) right 4px center / 4px 5px no-repeat,
    linear-gradient(#fff, #d7d7d7);
}
.layerbox {
  display: flex;
  align-items: center;
  flex: 1;
  height: 19px;
  gap: 1px;
  padding-left: 3px;
  background: linear-gradient(#fff, #d7d7d7);
}
.layerbox svg {
  width: 14px;
  height: 14px;
  flex: none;
}
.layer {
  flex: 1;
  padding-left: 2px;
}
.layerbox.color {
  flex: none;
  width: 94px;
}
.bylayer {
  flex: 1;
  font: bold 11px/19px 'Liberation Serif', serif;
}
.work {
  display: flex;
  flex: 1;
  min-height: 310px;
  background: #555;
}
.rail {
  display: flex;
  flex-direction: column;
  align-items: center;
  flex: none;
  width: 27px;
  padding: 2px 4px 0 0;
  background: #535353;
  border-right: 3px solid #6a6a6a;
}
.rail button {
  display: grid;
  place-items: center;
  width: 20px;
  height: 20px;
}
.rail svg {
  width: 15px;
  height: 15px;
}
.hgrip {
  width: 14px;
  height: 5px;
  background: repeating-linear-gradient(#2e2e2e 0 1px, #6a6a6a 1px 2px);
}
.hgrip.soft {
  background: repeating-linear-gradient(#7d7d7d 0 1px, #5c5c5c 1px 2px);
}
.rail.right {
  width: 29px;
  padding: 2px 0 0;
  border-left: 3px solid #686868;
  border-right: 2px solid #6b6b6b;
}
.view {
  display: grid;
  grid-template: 1fr 16px / 1fr 16px;
  flex: 1;
}
.canvas {
  position: relative;
  overflow: hidden;
}
.drawing {
  position: absolute;
  inset: 0;
  width: 100%;
  height: 100%;
}
.axis {
  font: 300 17px 'Open Sans', sans-serif;
  fill: #dcdce0;
}
.viewlabel {
  position: absolute;
  left: 2px;
  top: 4px;
  font-size: 12px;
  color: #eaeaea;
}
.compass {
  position: absolute;
  top: 5px;
  right: 5px;
  width: 58px;
}
.compass svg {
  width: 56px;
  height: 60px;
}
.dirs {
  font: 8px 'Noto Sans CJK SC', sans-serif;
  fill: #b9bdc3;
}
.top {
  font-size: 11px;
  fill: #555b63;
}
.wcs {
  display: flex;
  align-items: center;
  justify-content: space-between;
  width: 44px;
  height: 16px;
  margin: 6px 0 0 5px;
  padding: 0 4px;
  border: 1px solid #b5b8c3;
  border-radius: 4px;
  background: #8e929e;
  font: 10px 'Liberation Sans', sans-serif;
  color: #e5e7eb;
}
.wcs span {
  width: 6px;
  height: 5px;
  border: 1px solid #a4a8b3;
  border-radius: 3px;
}
.vscroll {
  display: flex;
  flex-direction: column;
  align-items: center;
  padding: 6px 0;
  background: #efefef;
}
.hscroll {
  display: flex;
  grid-column: 1 / 3;
  align-items: center;
  padding-right: 16px;
  background: #efefef;
}
.up,
.down {
  border: 3px solid transparent;
  border-bottom: 4px solid #333;
  border-top: 0;
}
.down {
  border-bottom: 0;
  border-top: 4px solid #333;
}
.thumb {
  flex: none;
  width: 14px;
  height: 14px;
  border: 1px solid #888;
  border-radius: 2px;
  background: linear-gradient(90deg, #fafafa, #c7c7c7);
}
.space-a {
  flex: 176;
}
.space-b {
  flex: 87;
}
.space-c {
  flex: 385;
}
.space-d {
  flex: 178;
}
.arrow {
  display: grid;
  place-items: center;
  width: 14px;
  height: 14px;
  border: 1px solid #ccc;
  background: #f4f4f4;
}
.left {
  border: 3px solid transparent;
  border-right: 4px solid #222;
  border-left: 0;
}
.arrow .right {
  border: 3px solid transparent;
  border-right: 0;
  border-left: 4px solid #222;
}
.cmd {
  display: flex;
  flex: none;
  border-top: 1px solid #666;
}
.cmdside {
  display: flex;
  flex-direction: column;
  align-items: center;
  gap: 5px;
  width: 21px;
  padding-top: 3px;
  background: #666;
}
.cmdside svg {
  width: 15px;
  height: 15px;
}
.cmdmain {
  flex: 1;
}
.history {
  padding: 1px 2px;
  background: #c5c5c5;
  color: #111;
  font: 12px/14px 'Noto Sans CJK SC', sans-serif;
}
.history p {
  height: 14px;
  white-space: pre;
}
.latin {
  font: 10px/14px 'DejaVu Sans Mono', monospace;
}
.entry {
  display: flex;
  align-items: center;
  gap: 4px;
  height: 21px;
  padding-left: 5px;
  background: #fff;
  border-top: 1px solid #aaa;
}
.entry svg {
  width: 14px;
  height: 14px;
}
.entry input {
  flex: 1;
  font-size: 12px;
  font-style: italic;
  color: #222;
}
.entry input::placeholder {
  color: #999;
  opacity: 1;
}
.layouts {
  display: flex;
  flex: none;
  height: 19px;
  padding: 1px 0 0 12px;
  background: #393939;
}
.ltab {
  width: 51px;
  height: 16px;
  margin-right: -2px;
  font-size: 12px;
  line-height: 15px;
  color: #aaa;
  background: #565656;
  clip-path: polygon(0 0, 100% 0, calc(100% - 3px) 20%, calc(100% - 7px) 85%, calc(100% - 11px) 100%, 11px 100%, 7px 85%, 3px 20%);
}
.ltab.on {
  color: #fff;
  font-weight: 700;
  background: #7b7b7b;
}
.ltab.add {
  width: 27px;
  font-size: 16px;
}
.status {
  display: flex;
  justify-content: flex-end;
  flex: none;
  height: 25px;
  background: #393939;
}
.statusbar {
  display: flex;
  align-items: center;
  padding-right: 1px;
  background: #4b4b4b;
  border: 1px solid #686868;
  border-right: 0;
}
.statusbar .drop {
  width: 15px;
}
.statusbar .sep {
  width: 3px;
  height: 23px;
}
.space-btn {
  width: 28px;
  height: 23px;
  font-size: 11px;
  font-weight: 700;
  color: #fff;
  background: #555;
  border-right: 1px solid #777;
}
.scale {
  width: 20px;
  font: bold 11px 'Liberation Serif', serif;
}
.badge {
  position: absolute;
  right: 25px;
  bottom: 25px;
  display: flex;
  flex-direction: column;
  align-items: center;
  width: 173px;
  height: 84px;
  padding: 13px 3px 0 0;
  background: #fff;
  font-family: 'Noto Sans CJK SC', sans-serif;
}
.badge strong {
  font-size: 32px;
  line-height: 38px;
  font-weight: 700;
  color: #06c63a;
}
.badge span {
  font-size: 18px;
  line-height: 22px;
  color: #8c8c8c;
}
</style>
